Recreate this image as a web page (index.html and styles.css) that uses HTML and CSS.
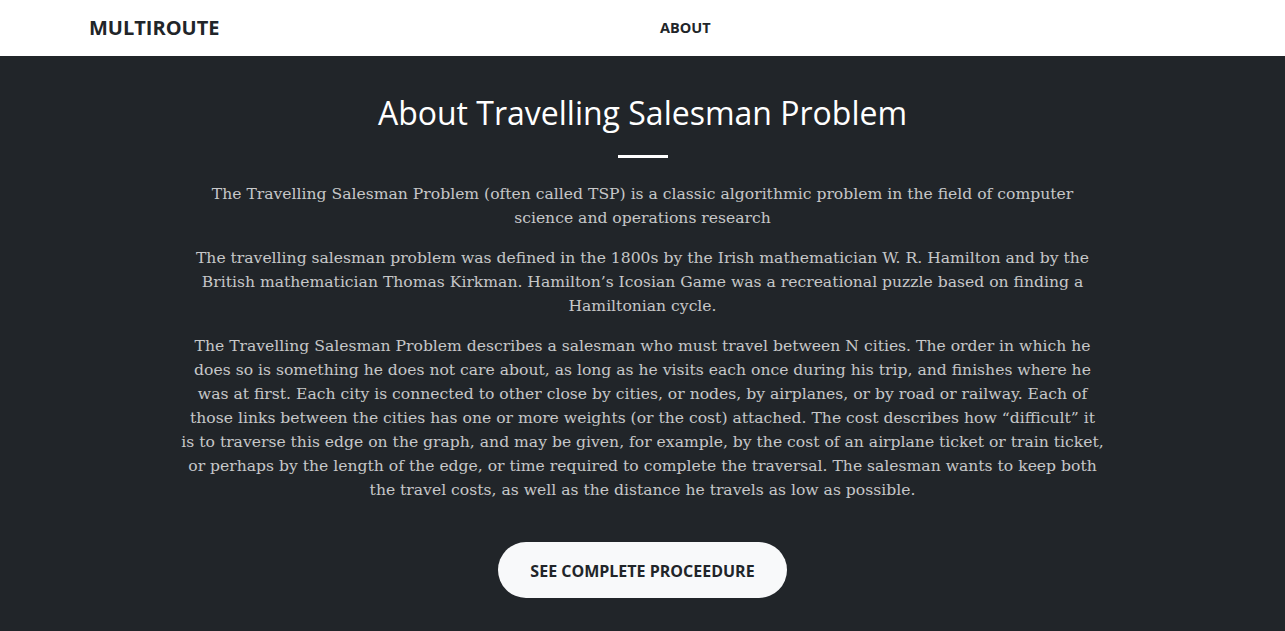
FILE: index.html
```html
<!DOCTYPE html>
<html lang="en">
<head>
<meta charset="utf-8">
<title>Multiroute - About</title>
<link rel="stylesheet" href="styles.css">
</head>
<body>
<nav class="navbar">
  <a class="brand" href="#">MULTIROUTE</a>
  <a class="nav-link" href="#">ABOUT</a>
</nav>
<section class="about">
  <h2 class="title">About Travelling Salesman Problem</h2>
  <hr class="divider">
  <div class="text">
    <p>The Travelling Salesman Problem (often called TSP) is a classic algorithmic problem in the field of computer science&nbsp;and operations research</p>
    <p>The travelling salesman problem was defined in the 1800s by the Irish mathematician W. R. Hamilton and by the British mathematician Thomas Kirkman. Hamilton’s Icosian Game was a recreational puzzle based on finding a Hamiltonian cycle.</p>
    <p>The Travelling Salesman Problem describes a salesman who must travel between N cities. The order in which he does so is something he does not care about, as long as he visits each once during his trip, and finishes where he was at first. Each city is connected to other close by cities, or nodes, by airplanes, or by road or railway. Each of those links between the cities has one or more weights (or the cost) attached. The cost describes how “difficult” it is&nbsp;to traverse this edge on the graph, and may be given, for example, by the cost of an airplane ticket or train ticket, or perhaps by the length of the edge, or time required to complete the traversal. The salesman wants to keep both the travel costs, as well as the distance he travels as low as possible.</p>
  </div>
  <a class="btn" href="#">SEE COMPLETE PROCEEDURE</a>
</section>
</body>
</html>
```

FILE: styles.css
```css
html, body {
  margin: 0;
  padding: 0;
}
body {
  background: #212529;
  font-family: "Open Sans", "Liberation Sans", sans-serif;
  height: 631px;
  overflow: hidden;
}
.navbar {
  height: 56px;
  background: #ffffff;
  display: flex;
  align-items: center;
  padding-left: 89px;
  padding-bottom: 1px;
  box-sizing: border-box;
}
.brand {
  font-weight: 700;
  font-size: 20px;
  color: #212529;
  text-decoration: none;
  width: 571px;
}
.nav-link {
  font-weight: 700;
  font-size: 14.5px;
  color: #212529;
  text-decoration: none;
}
.about {
  display: flex;
  flex-direction: column;
  align-items: center;
  padding-top: 38px;
}
.title {
  margin: 0;
  font-weight: 400;
  font-size: 32px;
  line-height: 38px;
  color: #ffffff;
}
.divider {
  width: 50px;
  height: 3px;
  margin: 23px 0 24px;
  border: 0;
  background: #ffffff;
}
.text {
  width: 926px;
  text-align: center;
  font-family: "DejaVu Serif", "Liberation Serif", serif;
  font-size: 15.6px;
  line-height: 24px;
  color: rgba(255, 255, 255, 0.75);
}
.text p {
  margin: 0 0 16px;
}
.btn {
  margin-top: 24px;
  width: 289px;
  height: 56px;
  padding-top: 2px;
  box-sizing: border-box;
  display: flex;
  align-items: center;
  justify-content: center;
  background: #f8f9fa;
  border-radius: 28px;
  color: #212529;
  font-weight: 700;
  font-size: 16px;
  text-decoration: none;
}
```
